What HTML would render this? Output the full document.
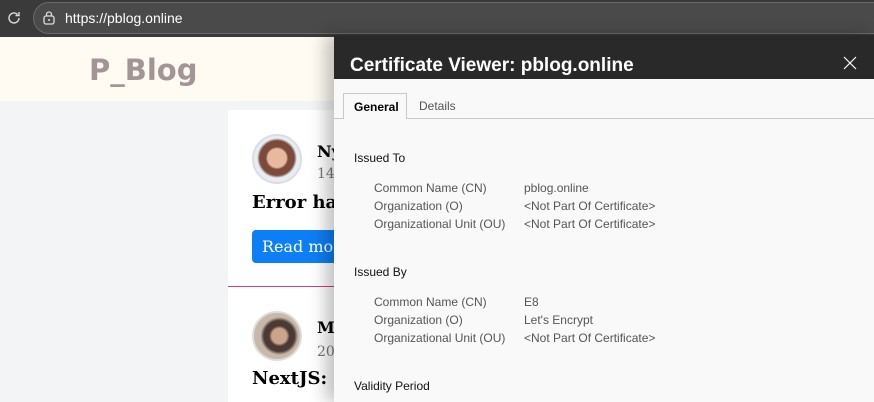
<!DOCTYPE html>
<html><head><style>
*{margin:0;padding:0;box-sizing:border-box}
body{width:874px;height:402px;overflow:hidden;position:relative;background:#f3f4f6;font-family:"Liberation Sans",sans-serif}
.top{position:absolute;left:0;top:0;width:874px;height:37px;background:#3a3a3a}
.pill{position:absolute;left:33px;top:2px;width:860px;height:32px;border-radius:16px;background:#4a4a4a;border:1px solid #6a6a6a}
.url{position:absolute;left:65px;top:10px;color:#fff;font-size:14px}
.hdr{position:absolute;left:0;top:37px;width:874px;height:64px;background:#fffbf3}
.logo{position:absolute;left:89px;top:53px;font-size:29px;color:#9a8a8c;font-family:"DejaVu Sans",sans-serif;font-weight:bold;opacity:.9}
.card{position:absolute;left:228px;top:110px;width:120px;height:292px;background:#fff}
.av{position:absolute;border-radius:50%;border:2px solid #ddd}
.serif{font-family:"DejaVu Serif","Liberation Serif",serif;position:absolute}
.dlg{position:absolute;left:334px;top:35px;width:540px;height:367px;background:#f9f9f9;box-shadow:-8px 0 16px rgba(0,0,0,.25)}
.dt{height:44px;background:#292929;color:#fff;font-size:19px;font-weight:bold;padding:20px 0 0 16px}
.x{position:absolute;right:17px;top:21px}
.tabs{position:absolute;left:0;top:83px;width:540px;height:1px;background:#c8c8c8}
.tab{position:absolute;left:9px;top:58px;width:64px;height:26px;border:1px solid #c8c8c8;border-bottom:none;background:#f9f9f9;font-size:12px;font-weight:bold;padding:6px 0 0 10px}
.tab2{position:absolute;left:85px;top:64px;font-size:12px;color:#555}
.s{position:absolute;left:20px;font-size:12px;color:#111}
.k{position:absolute;left:40px;font-size:12px;color:#555}
.v{position:absolute;left:190px;font-size:12px;color:#555}
</style></head><body>
<div class="top"><div class="pill"></div>
<svg style="position:absolute;left:6px;top:10px" width="16" height="16" viewBox="0 0 16 16"><path d="M13 8a5 5 0 1 1-1.6-3.7M13 2v3.5H9.5" fill="none" stroke="#ddd" stroke-width="1.4"/></svg>
<svg style="position:absolute;left:42px;top:10px" width="14" height="16" viewBox="0 0 14 16"><rect x="2" y="6" width="10" height="8" rx="2" fill="none" stroke="#ddd" stroke-width="1.3"/><path d="M4.5 6V4.5a2.5 2.5 0 0 1 5 0V6" fill="none" stroke="#ddd" stroke-width="1.3"/><circle cx="7" cy="10" r="1" fill="#ddd"/></svg>
<div class="url">https://pblog.online</div></div>
<div class="hdr"></div><div class="logo">P_Blog</div>
<div class="card"></div>
<div style="position:absolute;left:228px;top:286px;width:110px;height:1px;background:#d63f7a"></div>
<div class="av" style="left:252px;top:134px;width:50px;height:50px;background:radial-gradient(circle at 50% 48%,#e8b9a0 0 28%,#7b4a3a 34% 52%,#e6eef5 60%)"></div>
<div class="av" style="left:252px;top:311px;width:50px;height:50px;background:radial-gradient(circle at 55% 50%,#c9a58c 0 22%,#4a3a34 30% 45%,#c8b8a8 55%)"></div>
<div class="serif" style="left:317px;top:142px;font-size:16px;font-weight:bold">Ny</div>
<div class="serif" style="left:317px;top:166px;font-size:14px;color:#777">14</div>
<div class="serif" style="left:252px;top:192px;font-size:18px;font-weight:bold">Error ha</div>
<div style="position:absolute;left:252px;top:230px;width:90px;height:33px;background:#0d7ff6;border-radius:4px"></div>
<div class="serif" style="left:262px;top:237px;font-size:16px;color:#fff">Read more</div>
<div class="serif" style="left:317px;top:318px;font-size:16px;font-weight:bold">M</div>
<div class="serif" style="left:317px;top:344px;font-size:14px;color:#777">20</div>
<div class="serif" style="left:252px;top:368px;font-size:18px;font-weight:bold">NextJS: </div>
<div class="dlg">
<div class="dt">Certificate Viewer: pblog.online</div>
<svg class="x" width="14" height="14" viewBox="0 0 14 14"><path d="M1 1L13 13M13 1L1 13" stroke="#fff" stroke-width="1.2"/></svg>
<div class="tabs"></div><div class="tab">General</div><div class="tab2">Details</div>
<div class="s" style="top:116px">Issued To</div>
<div class="k" style="top:146px">Common Name (CN)</div><div class="v" style="top:146px">pblog.online</div>
<div class="k" style="top:164px">Organization (O)</div><div class="v" style="top:164px">&lt;Not Part Of Certificate&gt;</div>
<div class="k" style="top:182px">Organizational Unit (OU)</div><div class="v" style="top:182px">&lt;Not Part Of Certificate&gt;</div>
<div class="s" style="top:230px">Issued By</div>
<div class="k" style="top:260px">Common Name (CN)</div><div class="v" style="top:260px">E8</div>
<div class="k" style="top:278px">Organization (O)</div><div class="v" style="top:278px">Let's Encrypt</div>
<div class="k" style="top:296px">Organizational Unit (OU)</div><div class="v" style="top:296px">&lt;Not Part Of Certificate&gt;</div>
<div class="s" style="top:344px">Validity Period</div>
</div>
</body></html>
